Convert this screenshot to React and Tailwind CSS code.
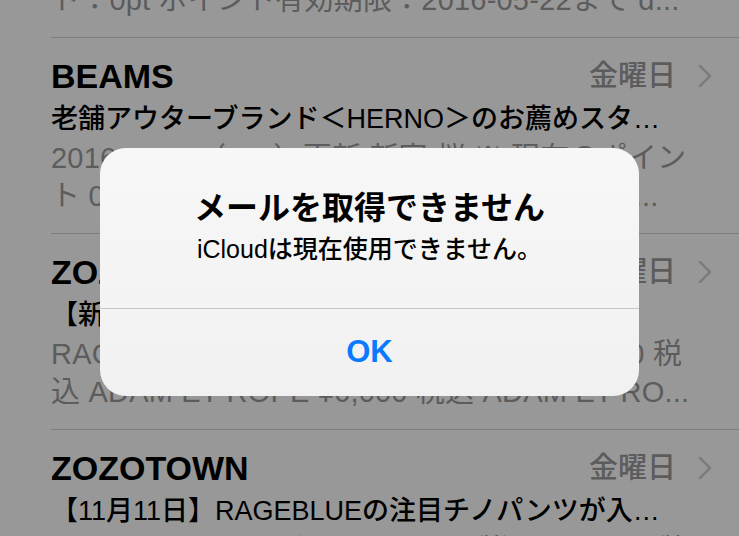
const font = { fontFamily: '"Liberation Sans", "Noto Sans CJK JP", sans-serif' }

const mails = [
  {
    sender: 'BEAMS',
    subject: '会員様限定のポイントのお知らせ',
    lines: ['2016-11-11（FRI）更新 新宿 桜 ※ 現在のポイン', 'ト：0pt ポイント有効期限：2016-05-22まで d...']
  },
  {
    sender: 'BEAMS',
    subject: '老舗アウターブランド＜HERNO＞のお薦めスタ…',
    lines: ['2016-11-11（FRI）更新 新宿 桜 ※ 現在のポイン', 'ト 0pt ポイント有効期限：2016-05-22まで d...']
  },
  {
    sender: 'ZOZOTOWN',
    subject: '【新着】人気ブランドの新作アイテムが入荷…',
    lines: ['RAGEBLUE チノパンツ ¥3,900 税込 ¥12,990 税', '込 ADAM ET ROPE ¥6,000 税込 ADAM ET RO...']
  },
  {
    sender: 'ZOZOTOWN',
    subject: '【11月11日】RAGEBLUEの注目チノパンツが入…',
    lines: ['RAGEBLUE チノパンツ ¥3,900 税込 ¥12,990 税', '込 ADAM ET ROPE ¥6,000 税込 ADAM ET RO...']
  }
]

function Chevron() {
  return (
    <svg className="w-[14px] h-[24px]" viewBox="0 0 14 24" fill="none" stroke="#7a7a7a" strokeWidth={2.4}>
      <path d="M2 2l10 10-10 10" strokeLinecap="round" strokeLinejoin="round" />
    </svg>
  )
}

function MailRow({ mail }) {
  return (
    <div className="ml-[51px] border-b border-[#7d7d7d] pt-[18px] pb-[18px] pr-[27px]">
      <div className="h-[40px] flex items-center justify-between">
        <span className="text-[34px] font-bold text-black leading-none">{mail.sender}</span>
        <div className="flex items-center gap-[22px]">
          <span className="text-[29px] font-medium text-[#5c5c5c] leading-none">金曜日</span>
          <Chevron />
        </div>
      </div>
      <div className="mt-[3px] h-[40px] flex items-center text-[27px] font-medium text-black whitespace-nowrap overflow-hidden pr-[12px]">
        {mail.subject}
      </div>
      <div className="text-[29px] tracking-[0.2px] leading-[38px] text-[#5c5c5c] whitespace-nowrap overflow-hidden">
        {mail.lines.map((l, i) => (
          <div key={i}>{l}</div>
        ))}
      </div>
    </div>
  )
}

export default function App() {
  return (
    <div className="relative w-[739px] h-[536px] overflow-hidden bg-[#989898]" style={font}>
      <div className="-mt-[158px]">
        {mails.map((m, i) => (
          <MailRow key={i} mail={m} />
        ))}
      </div>

      {/* alert */}
      <div className="absolute left-[100px] top-[148px] w-[539px] h-[248px] rounded-[26px] bg-gradient-to-b from-[#f7f7f7] to-[#f1f1f1] flex flex-col">
        <div className="pt-[38px] h-[160px] flex flex-col items-center">
          <div className="h-[44px] flex items-center text-[32px] font-bold text-black">メールを取得できません</div>
          <div className="mt-[3px] h-[34px] flex items-center text-[25px] font-medium text-black">iCloudは現在使用できません。</div>
        </div>
        <div className="h-px bg-[#c6c6ca]" />
        <div className="flex-1 flex items-center justify-center text-[31px] font-bold text-[#0a7aff]">OK</div>
      </div>
    </div>
  )
}
